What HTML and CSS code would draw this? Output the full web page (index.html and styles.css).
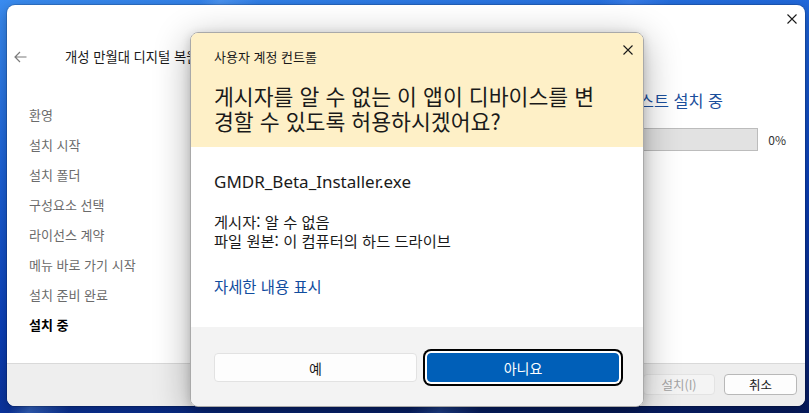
FILE: index.html
```html
<!DOCTYPE html>
<html lang="ko">
<head>
<meta charset="utf-8">
<title>사용자 계정 컨트롤</title>
<link rel="stylesheet" href="styles.css">
</head>
<body>
<div class="win">
  <div class="topbar">
    <svg class="x-icon" width="10" height="10" viewBox="0 0 10 10"><path d="M0.5 0.5L9.5 9.5M9.5 0.5L0.5 9.5" stroke="#1a1a1a" stroke-width="1.1" fill="none"/></svg>
  </div>
  <div class="titlerow">
    <svg class="back" width="13" height="12" viewBox="0 0 13 12"><path d="M12.5 6H1.2M6 1L1 6L6 11" stroke="#7b7b7b" stroke-width="1.2" fill="none"/></svg>
    <span class="apptitle">개성 만월대 디지털 복원 GMDR 베타 설치</span>
  </div>
  <div class="main">
    <ul class="nav">
      <li>환영</li>
      <li>설치 시작</li>
      <li>설치 폴더</li>
      <li>구성요소 선택</li>
      <li>라이선스 계약</li>
      <li>메뉴 바로 가기 시작</li>
      <li>설치 준비 완료</li>
      <li class="active">설치 중</li>
    </ul>
    <div class="content">
      <div class="heading">개성 만월대 디지털 복원 베타 테스트 설치 중</div>
      <div class="progress-row">
        <div class="bar"></div>
        <span class="pct">0%</span>
      </div>
    </div>
  </div>
  <div class="footer">
    <button class="btn btn-disabled">설치(I)</button>
    <button class="btn btn-cancel">취소</button>
  </div>
</div>

<div class="uac">
  <div class="dhead">
    <div class="dtitle">사용자 계정 컨트롤</div>
    <div class="question">게시자를 알 수 없는 이 앱이 디바이스를 변<br>경할 수 있도록 허용하시겠어요?</div>
    <svg class="dclose" width="10" height="10" viewBox="0 0 10 10"><path d="M0.5 0.5L9.5 9.5M9.5 0.5L0.5 9.5" stroke="#1a1a1a" stroke-width="1.1" fill="none"/></svg>
  </div>
  <div class="dbody">
    <div class="fname">GMDR_Beta_Installer.exe</div>
    <div class="info">
      <div>게시자: 알 수 없음</div>
      <div>파일 원본: 이 컴퓨터의 하드 드라이브</div>
    </div>
    <div class="more">자세한 내용 표시</div>
  </div>
  <div class="dfoot">
    <button class="dbtn dbtn-yes">예</button>
    <button class="dbtn dbtn-no">아니요</button>
  </div>
</div>
</body>
</html>
```
FILE: styles.css
```css
* { box-sizing: border-box; }
html, body { margin: 0; padding: 0; }
body {
  width: 809px;
  height: 413px;
  overflow: hidden;
  position: relative;
  font-family: "Noto Sans CJK KR", "Noto Sans", sans-serif;
  color: #1a1a1a;
  background:
    linear-gradient(115deg, transparent 0 20%, rgba(120,180,255,.35) 22%, transparent 26%, transparent 60%, rgba(90,150,255,.35) 63%, transparent 67%),
    linear-gradient(170deg, #3a8cf0 0%, #1d63d8 30%, #0b3fb8 60%, #0a2a86 85%, #061a5c 100%);
}

.win {
  margin: 5px 4px 0 7px;
  height: 401px;
  background: #fff;
  border-radius: 8px;
  overflow: hidden;
  display: flex;
  flex-direction: column;
  box-shadow: 0 0 0 1px rgba(0,0,0,.15), 0 4px 14px rgba(0,0,0,.3);
}

.topbar {
  height: 30px;
  display: flex;
  justify-content: flex-end;
  align-items: flex-start;
  padding-right: 8px;
}
.x-icon { margin-top: 9px; display: block; }

.titlerow {
  height: 44px;
  display: flex;
  align-items: center;
  padding-left: 7px;
}
.back { display: block; }
.apptitle {
  margin-left: 38px;
  font-size: 13.3px;
  line-height: 18px;
  color: #1a1a1a;
  white-space: nowrap;
}

.main {
  flex: 1;
  display: grid;
  grid-template-columns: 380px 1fr;
}
.nav {
  list-style: none;
  margin: 0;
  padding: 21px 0 0 22px;
}
.nav li {
  height: 30px;
  line-height: 30px;
  font-size: 13px;
  color: #6b6b6b;
  white-space: nowrap;
}
.nav li.active {
  color: #000;
  font-weight: 700;
}

.content { padding-top: 11px; }
.heading {
  margin-right: 82px;
  text-align: right;
  font-size: 16.3px;
  line-height: 20px;
  color: #1b4f9c;
  white-space: nowrap;
}
.progress-row {
  margin-top: 18px;
  display: flex;
  justify-content: flex-end;
  align-items: center;
  gap: 10px;
  padding-right: 19px;
}
.bar {
  flex: 1;
  height: 23px;
  background: #e2e2e2;
  border: 1px solid #bcbcbc;
}
.pct {
  font-size: 12px;
  color: #333;
}

.footer {
  height: 43px;
  border-top: 1px solid #d9d9d9;
  background: #eeeeee;
  display: flex;
  justify-content: flex-end;
  align-items: center;
  gap: 9px;
  padding: 0 8px 1px 0;
}
.btn {
  height: 21px;
  border-radius: 4px;
  font-family: "Noto Sans CJK KR", sans-serif;
  font-size: 12.5px;
  padding: 0;
  line-height: 19px;
}
.btn-disabled {
  width: 72px;
  background: #f4f4f4;
  border: 1px solid #e3e3e3;
  color: #a3a3a3;
}
.btn-cancel {
  width: 73px;
  background: #fdfdfd;
  border: 1px solid #b8b8b8;
  color: #1a1a1a;
}

.uac {
  position: absolute;
  left: 190px;
  top: 32px;
  width: 454px;
  height: 375px;
  border: 1px solid #a9a9a9;
  border-radius: 8px;
  overflow: hidden;
  display: flex;
  flex-direction: column;
  box-shadow: 0 8px 36px rgba(0,0,0,.32), 0 2px 10px rgba(0,0,0,.15);
}
.dhead {
  position: relative;
  height: 114px;
  background: #fef0c7;
  padding: 15px 24px 0 23px;
}
.dtitle {
  font-size: 13px;
  line-height: 18px;
  color: #1a1a1a;
}
.question {
  margin-top: 17px;
  font-size: 21.6px;
  line-height: 25px;
  color: #1a1a1a;
  white-space: nowrap;
}
.dclose {
  position: absolute;
  top: 12px;
  right: 10px;
  display: block;
}
.dbody {
  height: 180px;
  background: #fff;
  padding: 23px 24px 0 23px;
}
.fname {
  font-family: "Noto Sans", sans-serif;
  font-size: 17px;
  line-height: 24px;
  color: #1a1a1a;
}
.info {
  margin-top: 18px;
  font-size: 15.3px;
  line-height: 19px;
  color: #1a1a1a;
}
.more {
  margin-top: 27px;
  font-size: 15.4px;
  line-height: 19px;
  color: #104c9e;
}
.dfoot {
  flex: 1;
  background: #f3f3f3;
  padding: 26px 24px 0 23px;
  display: grid;
  grid-template-columns: 203px 192px;
  column-gap: 10px;
  align-content: start;
}
.dbtn {
  height: 29px;
  border-radius: 4px;
  font-family: "Noto Sans CJK KR", sans-serif;
  font-size: 14px;
  padding: 0;
}
.dbtn-yes {
  background: #fdfdfd;
  border: 1px solid #e2e2e2;
  color: #1a1a1a;
}
.dbtn-no {
  background: #005fb8;
  border: 1px solid #005fb8;
  color: #fff;
  box-shadow: 0 0 0 2px #ffffff, 0 0 0 4px #000000;
}
```
